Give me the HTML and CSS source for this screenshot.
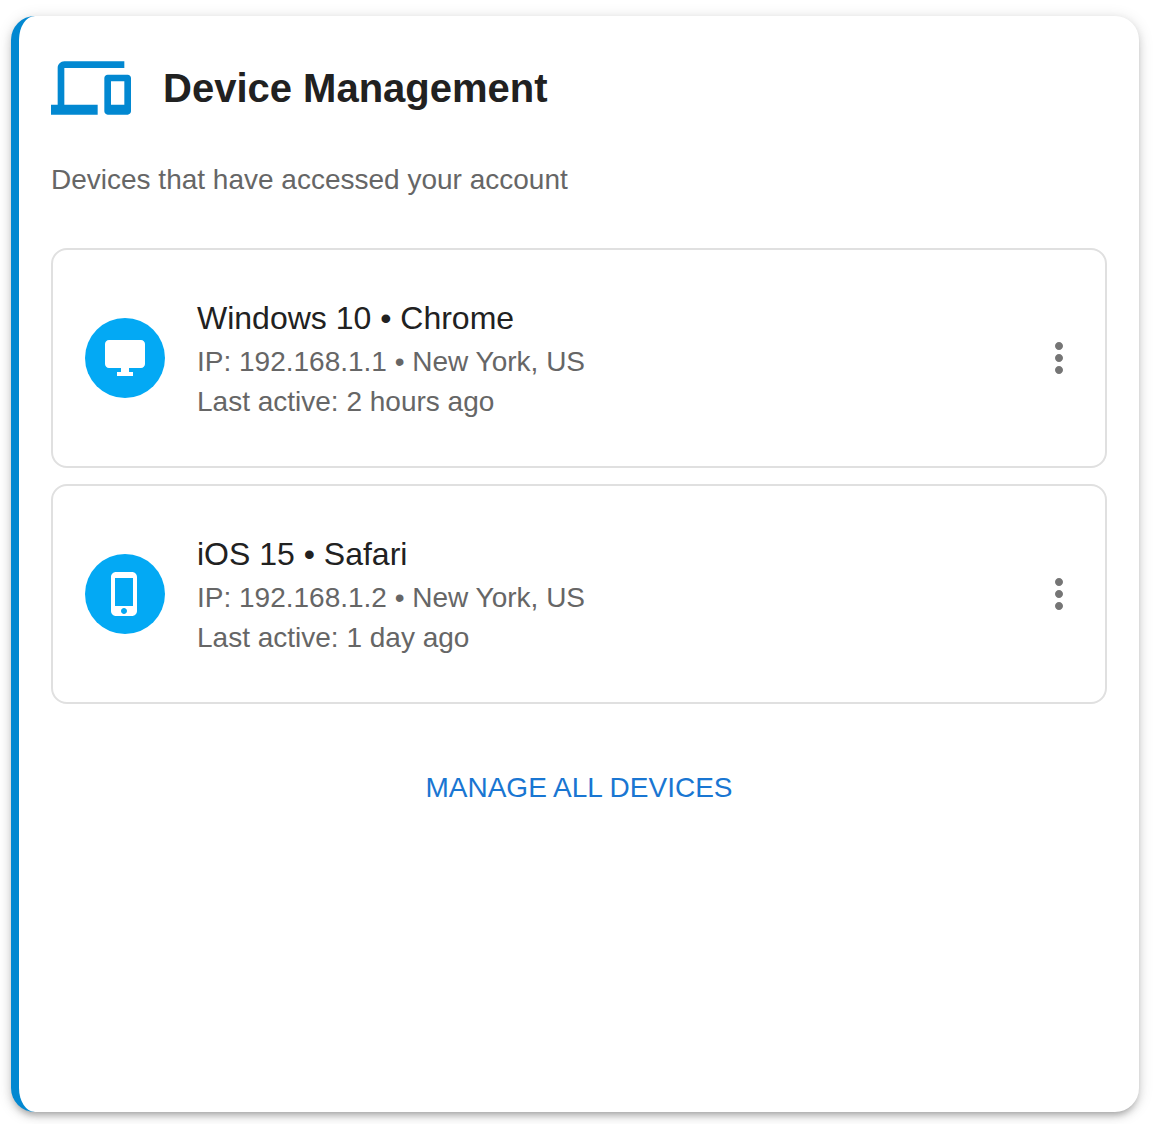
FILE: index.html
```html
<!DOCTYPE html>
<html lang="en">
<head>
    <meta charset="UTF-8">
    <meta name="viewport" content="width=device-width, initial-scale=1.0">
    <title>Device Management</title>
    <link rel="stylesheet" href="styles.css">
</head>
<body>
    <main class="card">
        <header class="card-header">
            <svg class="header-icon" viewBox="0 0 24 24" aria-hidden="true">
                <path d="M4 6h18V4H4c-1.1 0-2 .9-2 2v11H0v3h14v-3H4V6zm19 2h-6c-.55 0-1 .45-1 1v10c0 .55.45 1 1 1h6c.55 0 1-.45 1-1V9c0-.55-.45-1-1-1zm-1 9h-4v-7h4v7z"/>
            </svg>
            <h1>Device Management</h1>
        </header>
        <p class="subtitle">Devices that have accessed your account</p>

        <ul class="devices">
            <li class="device">
                <span class="avatar">
                    <svg class="icon" viewBox="0 0 24 24" aria-hidden="true">
                        <path d="M20 3H4c-1.1 0-2 .9-2 2v10c0 1.1.9 2 2 2h6v2H8v2h8v-2h-2v-2h6c1.1 0 2-.9 2-2V5c0-1.1-.9-2-2-2z"/>
                    </svg>
                </span>
                <div class="device-info">
                    <h2>Windows 10 • Chrome</h2>
                    <p>IP: 192.168.1.1 • New York, US</p>
                    <p>Last active: 2 hours ago</p>
                </div>
                <button type="button" class="menu-button" aria-label="More options">
                    <svg class="icon" viewBox="0 0 24 24" aria-hidden="true">
                        <path d="M12 8c1.1 0 2-.9 2-2s-.9-2-2-2-2 .9-2 2 .9 2 2 2zm0 2c-1.1 0-2 .9-2 2s.9 2 2 2 2-.9 2-2-.9-2-2-2zm0 6c-1.1 0-2 .9-2 2s.9 2 2 2 2-.9 2-2-.9-2-2-2z"/>
                    </svg>
                </button>
            </li>
            <li class="device">
                <span class="avatar">
                    <svg class="icon" viewBox="0 0 24 24" aria-hidden="true">
                        <path d="M15.5 1h-8C6.12 1 5 2.12 5 3.5v17C5 21.88 6.12 23 7.5 23h8c1.38 0 2.5-1.12 2.5-2.5v-17C18 2.12 16.88 1 15.5 1zm-4 21c-.83 0-1.5-.67-1.5-1.5s.67-1.5 1.5-1.5 1.5.67 1.5 1.5-.67 1.5-1.5 1.5zm4.5-4H7V4h9v14z"/>
                    </svg>
                </span>
                <div class="device-info">
                    <h2>iOS 15 • Safari</h2>
                    <p>IP: 192.168.1.2 • New York, US</p>
                    <p>Last active: 1 day ago</p>
                </div>
                <button type="button" class="menu-button" aria-label="More options">
                    <svg class="icon" viewBox="0 0 24 24" aria-hidden="true">
                        <path d="M12 8c1.1 0 2-.9 2-2s-.9-2-2-2-2 .9-2 2 .9 2 2 2zm0 2c-1.1 0-2 .9-2 2s.9 2 2 2 2-.9 2-2-.9-2-2-2zm0 6c-1.1 0-2 .9-2 2s.9 2 2 2 2-.9 2-2-.9-2-2-2z"/>
                    </svg>
                </button>
            </li>
        </ul>

        <button type="button" class="manage-button">MANAGE ALL DEVICES</button>
    </main>
</body>
</html>
```
FILE: styles.css
```css
* {
    box-sizing: border-box;
}

body {
    display: flex;
    min-height: 100vh;
    margin: 0;
    padding: 16px 21px 12px 11px;
    background-color: #fff;
    color: #212121;
    font-family: "Liberation Sans", Helvetica, Arial, sans-serif;
    font-size: 28px;
    line-height: 40px;
}

h1,
h2,
p {
    margin: 0;
}

svg {
    display: block;
    fill: currentColor;
}

.card {
    flex: 1;
    display: flex;
    flex-direction: column;
    padding: 32px;
    background-color: #fff;
    border-left: 8px solid #0288d1;
    border-radius: 24px;
    box-shadow: 0 6px 6px -4px rgba(0, 0, 0, 0.2),
        0 4px 8px rgba(0, 0, 0, 0.14),
        0 2px 16px rgba(0, 0, 0, 0.12);
}

.card-header {
    display: flex;
    align-items: center;
    gap: 32px;
}

.card-header h1 {
    font-size: 40px;
    font-weight: 700;
    line-height: 64px;
}

.header-icon {
    width: 80px;
    height: 80px;
    color: #0288d1;
}

.subtitle {
    margin-top: 32px;
    color: #666;
}

.devices {
    display: flex;
    flex-direction: column;
    gap: 16px;
    margin: 48px 0;
    padding: 0;
    list-style: none;
}

.device {
    display: flex;
    align-items: center;
    gap: 32px;
    padding: 44px 6px 44px 32px;
    border: 2px solid #e0e0e0;
    border-radius: 16px;
}

.avatar {
    display: flex;
    align-items: center;
    justify-content: center;
    width: 80px;
    height: 80px;
    background-color: #03a9f4;
    border-radius: 50%;
    color: #fff;
}

.icon {
    width: 48px;
    height: 48px;
}

.device-info {
    flex: 1;
    color: #666;
}

.device-info h2 {
    color: #212121;
    font-size: 32px;
    font-weight: 400;
    line-height: 48px;
}

button {
    background: none;
    border: none;
    font-family: inherit;
    cursor: pointer;
}

.menu-button {
    padding: 16px;
    border-radius: 50%;
    color: #757575;
}

.manage-button {
    align-self: center;
    padding: 12px 16px;
    border-radius: 8px;
    color: #1976d2;
    font-size: 28px;
    line-height: 48px;
}

.menu-button:hover,
.manage-button:hover {
    background-color: rgba(25, 118, 210, 0.04);
}
```
